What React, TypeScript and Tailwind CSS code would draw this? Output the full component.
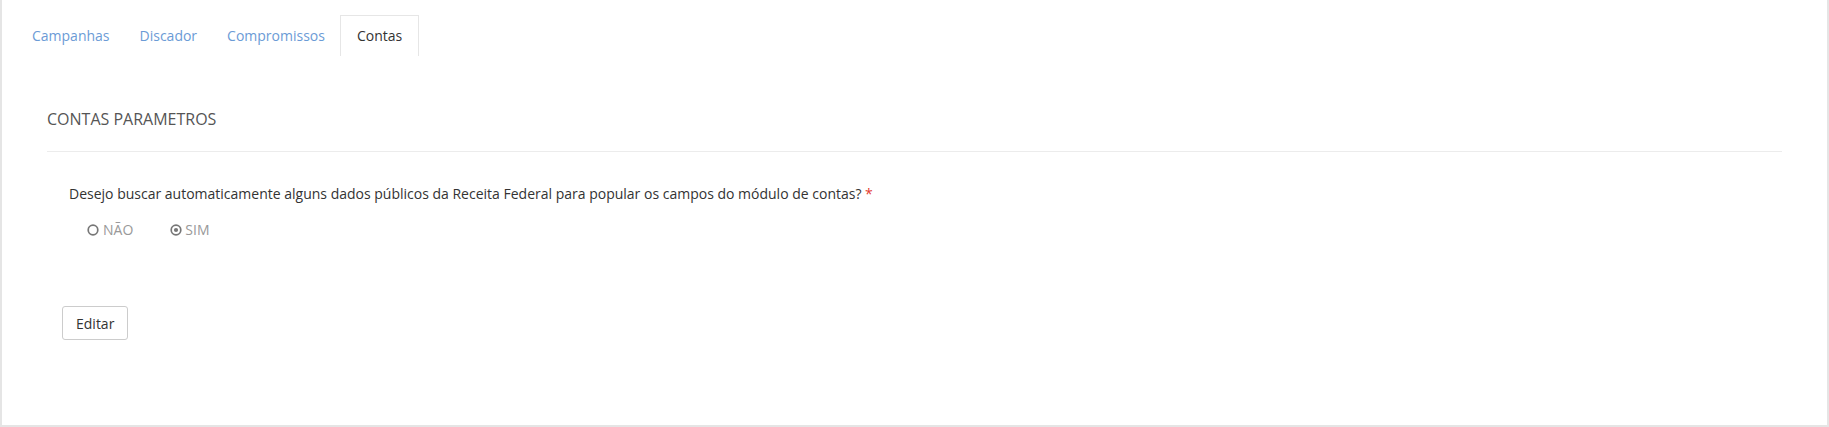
import { useState } from 'react'

const tabs = ['Campanhas', 'Discador', 'Compromissos', 'Contas']

function RadioIcon({ checked }: { checked: boolean }) {
    return (
        <svg width="12" height="12" viewBox="0 0 12 12" className="shrink-0">
            <circle cx="6" cy="6" r="4.8" fill="none" stroke="#777" strokeWidth="1.7" />
            {checked && <circle cx="6" cy="6" r="2.1" fill="#777" />}
        </svg>
    )
}

export default function App() {
    const [active, setActive] = useState('Contas')
    const [choice, setChoice] = useState<'nao' | 'sim'>('sim')

    return (
        <div className="w-full h-[427px] bg-[#e5e5e5] pl-[2px] pr-[2px] pb-[2px]" style={{ fontFamily: '"Open Sans", sans-serif' }}>
            <div className="h-full bg-white flex flex-col">
                {/* Tabs */}
                <ul className="flex pl-[15px] pt-[15px]">
                    {tabs.map(t => (
                        <li key={t}>
                            <button
                                onClick={() => setActive(t)}
                                className={
                                    t === active
                                        ? 'px-[16px] pt-[10px] pb-[10px] text-[14px] leading-[20px] text-[#333] border border-b-0 border-[#e6e6e6] bg-white'
                                        : 'px-[14px] pt-[10px] pb-[10px] text-[14px] leading-[20px] text-[#6b9bd6] border border-b-0 border-transparent'
                                }
                            >
                                {t}
                            </button>
                        </li>
                    ))}
                </ul>

                {/* Panel */}
                <div className="px-[45px] pt-[52px]">
                    <h3 className="text-[16px] leading-[22px] text-[#555]">CONTAS PARAMETROS</h3>
                    <div className="mt-[21px] h-px bg-[#ececec]" />

                    <div className="pl-[22px] pt-[32px]">
                        <p className="text-[14px] leading-[20px] text-[#333]">
                            Desejo buscar automaticamente alguns dados públicos da Receita Federal para popular os campos do módulo de contas?{' '}
                            <span className="text-[#e33b2e]">*</span>
                        </p>
                        <div className="flex items-center gap-[37px] mt-[16px] pl-[18px] text-[14px] leading-[20px] text-[#999]">
                            <label className="flex items-center gap-[4px] cursor-pointer" onClick={() => setChoice('nao')}>
                                <RadioIcon checked={choice === 'nao'} />
                                NÃO
                            </label>
                            <label className="flex items-center gap-[3px] cursor-pointer" onClick={() => setChoice('sim')}>
                                <RadioIcon checked={choice === 'sim'} />
                                SIM
                            </label>
                        </div>
                    </div>

                    <button className="mt-[66px] ml-[15px] h-[34px] px-[13px] text-[14px] text-[#333] bg-white border border-[#ccc] rounded-[3px]">
                        Editar
                    </button>
                </div>
            </div>
        </div>
    )
}
